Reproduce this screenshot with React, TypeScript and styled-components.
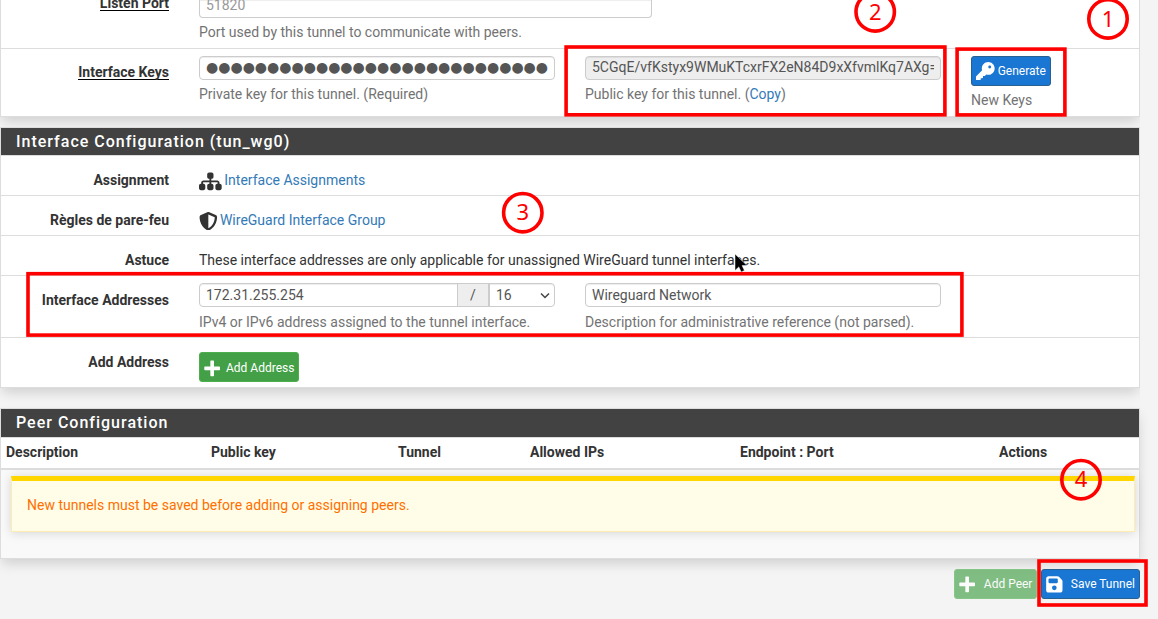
import React from "react";
import styled, { createGlobalStyle, css } from "styled-components";
import { FaFloppyDisk, FaKey, FaShieldHalved, FaSitemap } from "react-icons/fa6";

const GlobalStyle = createGlobalStyle`
  *, *::before, *::after { box-sizing: border-box; }
  html, body { margin: 0; padding: 0; }
  body {
    height: 619px;
    overflow: hidden;
    background: #f4f4f4;
    color: #333;
    font: 14px/20px Roboto, "Liberation Sans", sans-serif;
  }
`;

const Page = styled.main`
  position: relative;
  width: 1158px;
  height: 619px;
  overflow: hidden;
`;

const Container = styled.div`
  width: 1140px;
  display: flex;
  flex-direction: column;
`;

const Panel = styled.section<{ $gap: number; $open?: boolean; $clipped?: boolean }>`
  margin-bottom: ${(p) => p.$gap}px;
  background: #fff;
  border: 1px solid #ddd;
  box-shadow: 0 6px 12px -2px rgba(0, 0, 0, 0.16);
  ${(p) => p.$open && css`border-top: 0;`}
  ${(p) => p.$clipped && css`clip-path: inset(0 0 -24px 0);`}
`;

const PanelTitle = styled.h2<{ $height: number }>`
  margin: 0;
  height: ${(p) => p.$height}px;
  padding-left: 15px;
  background: #424242;
  border-bottom: 1px solid #ddd;
  color: #fff;
  font-size: 16px;
  font-weight: 500;
  line-height: 27px;
  letter-spacing: 1px;
`;

const Row = styled.div<{ $height: number; $pad: number; $last?: boolean }>`
  display: grid;
  grid-template-columns: 168px 356px 356px auto;
  column-gap: 30px;
  align-items: start;
  height: ${(p) => p.$height}px;
  padding-top: ${(p) => p.$pad}px;
  border-bottom: ${(p) => (p.$last ? "0" : "1px solid #ddd")};
`;

const Label = styled.div<{ $drop?: number }>`
  justify-self: end;
  padding-top: ${(p) => p.$drop ?? 0}px;
  font-weight: 700;
  white-space: nowrap;
`;

const Required = styled.span`
  display: block;
  height: 18px;
  border-bottom: 1px solid #000;
`;

const PortLabel = styled.span`
  display: block;
  margin-top: -7px;
`;

const Cell = styled.div<{ $wide?: boolean }>`
  display: flex;
  flex-direction: column;
  align-items: flex-start;
  white-space: nowrap;
  ${(p) => p.$wide && css`grid-column: span 2;`}
`;

const Field = styled.div<{ $disabled?: boolean }>`
  width: 100%;
  height: 24px;
  padding: 0 6px;
  background: ${(p) => (p.$disabled ? "#eee" : "#fff")};
  border: 1px solid #ccc;
  border-radius: 4px;
  box-shadow: inset 0 1px 1px rgba(0, 0, 0, 0.075);
  color: #555;
  line-height: 22px;
  white-space: nowrap;
`;

const PortField = styled(Field)`
  width: 453px;
  height: 18px;
  border-top: 0;
  border-radius: 0 0 4px 4px;
  color: #999;
  line-height: 11px;
`;

const KeyText = styled.div`
  overflow: hidden;
  line-height: 20px;
`;

const Dots = styled.div`
  font-family: "DejaVu Sans", sans-serif;
  font-size: 14px;
  line-height: 20px;
`;

const Help = styled.div<{ $top?: number }>`
  margin-top: ${(p) => p.$top ?? 4}px;
  color: #737373;
`;

const Link = styled.a`
  color: #337ab7;
  text-decoration: none;
`;

const IconLine = styled.div<{ $icon: number; $gap: number }>`
  display: flex;
  align-items: center;
  gap: ${(p) => p.$gap}px;
  height: 20px;
  svg {
    position: relative;
    top: 1px;
    flex: none;
    width: ${(p) => p.$icon}px;
    height: ${(p) => p.$icon}px;
  }
`;

const Group = styled.div`
  display: flex;
  width: 356px;
  height: 24px;
  border: 1px solid #ccc;
  border-radius: 4px;
  box-shadow: inset 0 1px 1px rgba(0, 0, 0, 0.075);
  color: #555;
  line-height: 22px;
`;

const GroupInput = styled.div`
  width: 257px;
  padding-left: 6px;
`;

const Addon = styled.div`
  width: 33px;
  background: #eee;
  border: solid #ccc;
  border-width: 0 2px 0 1px;
  text-align: center;
`;

const Select = styled.div`
  flex: 1;
  display: flex;
  align-items: center;
  justify-content: space-between;
  padding: 0 4px 0 6px;
`;

const Button = styled.button<{
  $tone: "primary" | "success";
  $width: number;
  $gap: number;
  $inset?: number;
  $faded?: boolean;
  $sink?: boolean;
}>`
  display: flex;
  align-items: center;
  gap: ${(p) => p.$gap}px;
  width: ${(p) => p.$width}px;
  height: 30px;
  padding: ${(p) => (p.$sink ? 2 : 0)}px 0 0 ${(p) => p.$inset ?? 4}px;
  border: 1px solid ${(p) => (p.$tone === "primary" ? "#286090" : "#4cae4c")};
  border-radius: 3px;
  background: ${(p) => (p.$tone === "primary" ? "#1976d2" : "#43a047")};
  color: #fff;
  font: 12px/18px Roboto, "Liberation Sans", sans-serif;
  white-space: nowrap;
  opacity: ${(p) => (p.$faded ? 0.65 : 1)};
  svg { flex: none; width: auto; height: 18.67px; }
`;

const TableHead = styled.div`
  display: grid;
  grid-template-columns: 205px 187px 132px 210px 259px auto;
  height: 32px;
  padding: 4px 0 0 5px;
  border-bottom: 2px solid #ddd;
  font-weight: 700;
`;

const TableBody = styled.div`
  height: 88px;
  padding: 6px 4px 0 10px;
  background: #f9f9f9;
`;

const Alert = styled.div`
  height: 56px;
  padding: 14px 15px;
  background: #fffde7;
  border: 1px solid #ffecb3;
  border-top: 5px solid #ffd600;
  box-shadow: 0 1px 10px rgba(0, 0, 0, 0.15);
  color: #ff6f00;
`;

const Actions = styled.div`
  display: flex;
  justify-content: flex-end;
  gap: 4px;
`;

const Marks = styled.svg`
  position: absolute;
  inset: 0;
  pointer-events: none;
`;

const PlusIcon = () => (
  <svg viewBox="0 0 448 512" fill="currentColor">
    <path d="M192 40h64q18 0 18 18v148h148q18 0 18 18v64q0 18-18 18H274v148q0 18-18 18h-64q-18 0-18-18V306H26q-18 0-18-18v-64q0-18 18-18h148V58q0-18 18-18z" />
  </svg>
);

const boxes = [
  [564.3, 45.2, 382.4, 71.4],
  [955.3, 47.3, 111.4, 69.4],
  [26.2, 271.9, 937.5, 65],
  [1037.2, 559.2, 110.6, 47.6],
];

const badges: [number, number, string][] = [
  [1108, 18.9, "1"],
  [875.2, 11.9, "2"],
  [522.8, 212.7, "3"],
  [1081, 479.7, "4"],
];

export default function App() {
  return (
    <Page>
      <GlobalStyle />
      <Container>
        <Panel $gap={10} $open $clipped>
          <Row $height={49} $pad={0}>
            <Label><Required><PortLabel>Listen Port</PortLabel></Required></Label>
            <Cell $wide>
              <PortField>51820</PortField>
              <Help>Port used by this tunnel to communicate with peers.</Help>
            </Cell>
          </Row>
          <Row $height={67} $pad={7} $last>
            <Label $drop={6}><Required>Interface Keys</Required></Label>
            <Cell>
              <Field><Dots>{"●".repeat(28)}</Dots></Field>
              <Help>Private key for this tunnel. (Required)</Help>
            </Cell>
            <Cell>
              <Field $disabled><KeyText>5CGqE/vfKstyx9WMuKTcxrFX2eN84D9xXfvmlKq7AXg=</KeyText></Field>
              <Help>Public key for this tunnel. (<Link>Copy</Link>)</Help>
            </Cell>
            <Cell>
              <Button $tone="primary" $width={80} $gap={3}><FaKey />Generate</Button>
              <Help>New Keys</Help>
            </Cell>
          </Row>
        </Panel>

        <Panel $gap={20} $clipped>
          <PanelTitle $height={28}>Interface Configuration (tun_wg0)</PanelTitle>
          <Row $height={40} $pad={14}>
            <Label>Assignment</Label>
            <IconLine $icon={22.7} $gap={2.6}><FaSitemap /><Link>Interface Assignments</Link></IconLine>
          </Row>
          <Row $height={40} $pad={14}>
            <Label>Règles de pare-feu</Label>
            <IconLine $icon={18.67} $gap={2.3}><FaShieldHalved /><Link>WireGuard Interface Group</Link></IconLine>
          </Row>
          <Row $height={40} $pad={14}>
            <Label>Astuce</Label>
            <Cell $wide>These interface addresses are only applicable for unassigned WireGuard tunnel interfaces.</Cell>
          </Row>
          <Row $height={62} $pad={7}>
            <Label $drop={7}>Interface Addresses</Label>
            <Cell>
              <Group>
                <GroupInput>172.31.255.254</GroupInput>
                <Addon>/</Addon>
                <Select>
                  16
                  <svg width="10" height="10" viewBox="0 0 10 10" fill="none" stroke="#444" strokeWidth="1.5">
                    <path d="M1 3.5 5 7.5 9 3.5" />
                  </svg>
                </Select>
              </Group>
              <Help $top={5}>IPv4 or IPv6 address assigned to the tunnel interface.</Help>
            </Cell>
            <Cell>
              <Field>Wireguard Network</Field>
              <Help $top={5}>Description for administrative reference (not parsed).</Help>
            </Cell>
          </Row>
          <Row $height={49} $pad={14} $last>
            <Label>Add Address</Label>
            <Button $tone="success" $width={100} $gap={5.7} $sink><PlusIcon />Add Address</Button>
          </Row>
        </Panel>

        <Panel $gap={10}>
          <PanelTitle $height={29}>Peer Configuration</PanelTitle>
          <TableHead>
            <span>Description</span>
            <span>Public key</span>
            <span>Tunnel</span>
            <span>Allowed IPs</span>
            <span>Endpoint : Port</span>
            <span>Actions</span>
          </TableHead>
          <TableBody>
            <Alert>New tunnels must be saved before adding or assigning peers.</Alert>
          </TableBody>
        </Panel>

        <Actions>
          <Button $tone="success" $width={83} $gap={8.8} $inset={3.7} $faded><PlusIcon />Add Peer</Button>
          <Button $tone="primary" $width={99} $gap={7.5} $inset={2.7}><FaFloppyDisk />Save Tunnel</Button>
        </Actions>
      </Container>

      <Marks width="1158" height="619" viewBox="0 0 1158 619">
        <path d="M735 254v16.5l3.8-3.6 2.4 5 3.2-1.4-2.3-4.9h5z" fill="#000" stroke="#fff" strokeWidth="0.5" />
        <g fill="none" stroke="#f00" strokeWidth="3.6">
          {boxes.map(([x, y, w, h]) => (
            <rect key={x} x={x + 1.8} y={y + 1.8} width={w - 3.6} height={h - 3.6} />
          ))}
          {badges.map(([x, y, n]) => <circle key={n} cx={x} cy={y} r="19.2" />)}
        </g>
        <g fill="#f00" fontFamily="'Noto Sans', sans-serif" fontSize="22" textAnchor="middle">
          {badges.map(([x, y, n]) => <text key={n} x={x} y={y + 7.6}>{n}</text>)}
        </g>
      </Marks>
    </Page>
  );
}
